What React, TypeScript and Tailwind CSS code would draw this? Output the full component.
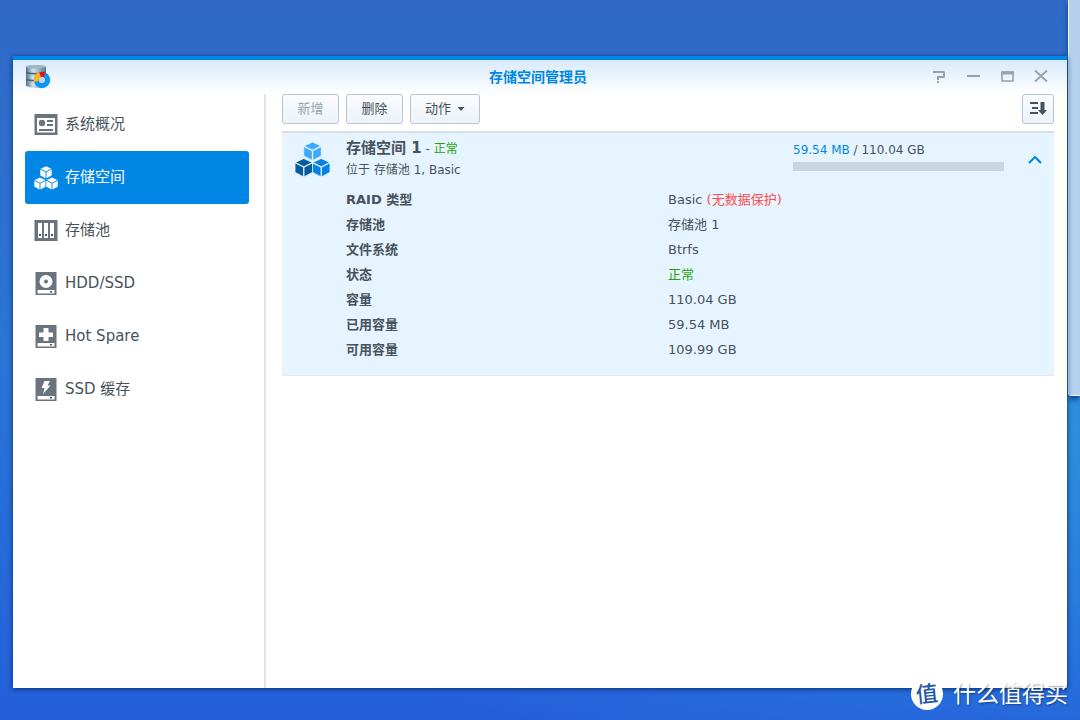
import { useState } from 'react';
import type { ReactNode } from 'react';
import clsx from 'clsx';

function CubesIcon({ size, top, left, right, line }: { size: number; top: string; left: string; right: string; line: string }) {
  const cubes = [
    { x: 17, y: 0, fill: top },
    { x: 8.5, y: 16, fill: left },
    { x: 25.5, y: 16, fill: right },
  ];
  return (
    <svg width={size} height={size} viewBox="0 0 34 34" className="shrink-0">
      {cubes.map((c) => (
        <g key={c.x} transform={`translate(${c.x} ${c.y})`}>
          <path d="M0 0L8.500 4V13.500L0 18L-8.500 13.500V4Z" fill={c.fill} stroke={line} strokeWidth="0.8" />
          <path d="M-8.500 4L0 8.400L8.500 4M0 8.400V18" fill="none" stroke={line} strokeWidth="1.300" />
        </g>
      ))}
    </svg>
  );
}

function OverviewIcon() {
  return (
    <svg width="24" height="24" viewBox="0 0 24 24" className="shrink-0">
      <path d="M0.5 1h23v21h-23z" fill="#69747f" />
      <path d="M3 5h18v14.500h-18z" fill="#fff" />
      <circle cx="8" cy="10" r="3.2" fill="#69747f" />
      <path d="M13 7h6v2h-6zM13 11h6v2h-6zM5 16h14v2H5z" fill="#69747f" />
    </svg>
  );
}

function PoolIcon() {
  return (
    <svg width="24" height="24" viewBox="0 0 24 24" className="shrink-0">
      <path d="M0.5 1h23v21h-23z" fill="#69747f" />
      <path d="M4 4h4v15h-4zM10 4h4v15h-4zM16 4h4v15h-4z" fill="#fff" />
      <path d="M5 15h2v2h-2zM11 15h2v2h-2zM17 15h2v2h-2z" fill="#4b5660" />
    </svg>
  );
}

function DriveIcon({ children }: { children: ReactNode }) {
  return (
    <svg width="24" height="24" viewBox="0 0 24 24" className="shrink-0">
      <path d="M1.5 0h21v23h-21z" fill="#69747f" />
      <path d="M3.500 18h17v3.500h-17z" fill="#fff" />
      <path d="M16 19h2v1.500h-2z" fill="#4b5660" />
      {children}
    </svg>
  );
}

const navItems = [
  { name: '系统概况', icon: <OverviewIcon /> },
  { name: '存储空间', icon: <CubesIcon size={24} top="#fff" left="#fff" right="#fff" line="#0086e5" /> },
  { name: '存储池', icon: <PoolIcon /> },
  {
    name: 'HDD/SSD',
    icon: (
      <DriveIcon>
        <circle cx="12" cy="9.500" r="6.5" fill="#fff" />
        <circle cx="12" cy="9.500" r="2" fill="#69747f" />
      </DriveIcon>
    ),
  },
  {
    name: 'Hot Spare',
    icon: (
      <DriveIcon>
        <path d="M9.500 3h5v4.500h4.500v4.500h-4.500v4h-5v-4H5V7.500h4.500z" fill="#fff" />
      </DriveIcon>
    ),
  },
  {
    name: 'SSD 缓存',
    icon: (
      <DriveIcon>
        <path d="M10.500 3h5.500l-2.500 4.500h3L9 16l1.500-6H7.500z" fill="#fff" />
      </DriveIcon>
    ),
  },
];

const details = [
  { label: 'RAID 类型', value: 'Basic', note: '(无数据保护)' },
  { label: '存储池', value: '存储池 1' },
  { label: '文件系统', value: 'Btrfs' },
  { label: '状态', value: '正常', ok: true },
  { label: '容量', value: '110.04 GB' },
  { label: '已用容量', value: '59.54 MB' },
  { label: '可用容量', value: '109.99 GB' },
];

const toolButton =
  'flex h-[30px] items-center justify-center rounded-[3px] border border-[#b9c4d2] bg-linear-to-b from-[#fafcfe] to-[#edf3f9] text-[13px]';

function AppIcon() {
  return (
    <svg width="26" height="26" viewBox="0 0 26 26">
      <defs>
        <linearGradient id="disk" x1="0" x2="1">
          <stop offset="0" stopColor="#4f7087" />
          <stop offset="0.35" stopColor="#d3e5f0" />
          <stop offset="1" stopColor="#54758c" />
        </linearGradient>
      </defs>
      <path d="M1 2.500Q11 -0.500 21 2.500V22Q11 26 1 22Z" fill="url(#disk)" />
      <ellipse cx="11" cy="2.800" rx="10" ry="1.800" fill="#9bb5c6" />
      <path d="M1 8.500Q11 11 21 8.500M1 15.500Q11 18 21 15.500" fill="none" stroke="#456276" strokeWidth="1.400" />
      <circle cx="17" cy="16" r="5.700" fill="none" stroke="#0b95f8" strokeWidth="5" />
      <path d="M11.500 17.500A5.700 5.700 0 0 1 17 10.300" fill="none" stroke="#fdb913" strokeWidth="5" />
      <path d="M15 10.600A5.700 5.700 0 0 1 19.500 10.900" fill="none" stroke="#e60f1e" strokeWidth="5" />
      <circle cx="17" cy="16" r="3" fill="#c3d8e5" />
    </svg>
  );
}

function TitleBar() {
  return (
    <header className="grid h-[34px] grid-cols-3 items-center bg-linear-to-b from-[#d8eafa] to-white pr-4 pl-3">
      <AppIcon />
      <h1 className="text-center text-sm font-bold text-[#0086e5]">存储空间管理员</h1>
      <div className="flex justify-end gap-[14px] text-[#98a2ad]">
        <button type="button" aria-label="帮助">
          <svg width="20" height="20" viewBox="0 0 20 20" fill="none" stroke="currentColor" strokeWidth="2">
            <path d="M4 5h10.500Q15 5 15 5.500V9.500Q15 10 14.500 10H9v3M8 15h2" />
          </svg>
        </button>
        <button type="button" aria-label="最小化">
          <svg width="20" height="20" viewBox="0 0 20 20" fill="none" stroke="currentColor" strokeWidth="2">
            <path d="M4 9h13" />
          </svg>
        </button>
        <button type="button" aria-label="最大化">
          <svg width="20" height="20" viewBox="0 0 20 20" fill="none" stroke="currentColor">
            <path d="M5 5h11v9H5z" strokeWidth="1.600" />
            <path d="M4 6h13" strokeWidth="3" />
          </svg>
        </button>
        <button type="button" aria-label="关闭">
          <svg width="20" height="20" viewBox="0 0 20 20" fill="none" stroke="currentColor" strokeWidth="1.800">
            <path d="M4 3.500l12 11M16 3.500l-12 11" />
          </svg>
        </button>
      </div>
    </header>
  );
}

function VolumeCard() {
  const [isOpen, setIsOpen] = useState(true);

  return (
    <section className="mt-[7px] border-t-2 border-b border-t-[#d3e0ec] border-b-[#dfeaf3] bg-[#e6f4ff]">
      <div className="flex items-start pt-[5px] pr-2">
        <div className="w-16 pt-1 pl-[13px]">
          <CubesIcon size={35} top="#3fa9ff" left="#045b9f" right="#0583e5" line="#e6f4ff" />
        </div>
        <div className="flex-1">
          <h2 className="text-[15px] leading-5 font-bold">
            存储空间 1<span className="text-xs font-normal"> - <span className="text-[#1fa50a]">正常</span></span>
          </h2>
          <p className="text-xs leading-6">位于 存储池 1, Basic</p>
        </div>
        <div className="w-[211px]">
          <p className="text-xs leading-6">
            <span className="text-[#0086e5]">59.54 MB</span> / 110.04 GB
          </p>
          <div className="h-[9px] bg-[#cbd5df]" />
        </div>
        <button
          type="button"
          aria-label="展开或收起"
          aria-expanded={isOpen}
          onClick={() => setIsOpen(!isOpen)}
          className="ml-[22px] pt-3 text-[#0086e5]"
        >
          <svg width="20" height="20" viewBox="0 0 20 20" fill="none" stroke="currentColor" strokeWidth="2">
            <path d="M3 13l6-6 6 6" />
          </svg>
        </button>
      </div>

      {isOpen && (
        <table className="mt-[5px] mb-[13px] w-full table-fixed text-left text-[13px]">
          <tbody>
            {details.map((row) => (
              <tr key={row.label} className="h-[25px] leading-[25px]">
                <th scope="row" className="w-1/2 pl-16 font-bold">{row.label}</th>
                <td className={clsx(row.ok && 'text-[#1fa50a]')}>
                  {row.value}
                  {row.note && <span className="text-[#ff4b4b]"> {row.note}</span>}
                </td>
              </tr>
            ))}
          </tbody>
        </table>
      )}
    </section>
  );
}

export default function App() {
  const [active, setActive] = useState('存储空间');

  return (
    <div className="relative flex min-h-screen flex-col overflow-hidden bg-linear-to-b from-[#3069c6] via-[#2a75d6] to-[#245fdb] pt-14 pr-[13px] pb-8 pl-[13px] font-['DejaVu_Sans','Noto_Sans_CJK_SC',sans-serif] text-[#48525c]">
      <div className="absolute inset-0 bg-radial-[at_100%_60%] from-[#2f9be0]/70 to-transparent to-60%" />

      {/* edge of the window that sits behind */}
      <div className="absolute top-0 right-0 h-[396px] w-3 rounded-bl-[3px] border-b border-l border-[#eaf5ff] bg-[#b5d1ee] shadow-md shadow-[#0b3f80]" />

      <div className="relative flex flex-1 flex-col border-t-4 border-[#0086e5] bg-white shadow-[0_1px_5px_#062e70]">
        <TitleBar />
        <div className="flex flex-1">
          <nav className="w-[253px] border-r-2 border-[#e2e4e6] pt-1 pr-[15px] pl-3">
            {navItems.map((item) => (
              <button
                key={item.name}
                type="button"
                onClick={() => setActive(item.name)}
                className={clsx(
                  'flex h-[53px] w-full items-center gap-[7px] rounded-[3px] pl-[9px] text-[15px]',
                  active === item.name && 'bg-[#0086e5] text-white',
                )}
              >
                {item.icon}
                {item.name}
              </button>
            ))}
          </nav>

          <main className="flex-1 pr-[13px] pl-4">
            <div className="flex gap-[7px]">
              <button type="button" disabled className={clsx(toolButton, 'w-[57px] text-[#9aa3ac]')}>新增</button>
              <button type="button" className={clsx(toolButton, 'w-[57px]')}>删除</button>
              <button type="button" className={clsx(toolButton, 'w-[70px] gap-1.5')}>
                动作
                <svg width="8" height="4" viewBox="0 0 8 4" fill="currentColor">
                  <path d="M0.500 0h7L4 4z" />
                </svg>
              </button>
              <button type="button" aria-label="排序" className={clsx(toolButton, 'ml-auto w-8')}>
                <svg width="20" height="16" viewBox="0 0 20 16" fill="currentColor">
                  <path d="M2 1h8v2H2zM4 6h6v2H4zM2 11h8v2H2zM12.500 1h4v8h2.500l-4.500 5-4.500-5h2.500z" />
                </svg>
              </button>
            </div>
            <VolumeCard />
          </main>
        </div>
      </div>

      <div className="absolute right-3 bottom-2.5 flex items-center gap-2.5 text-white">
        <span className="flex size-8 items-center justify-center rounded-full bg-white text-[22px] font-medium text-[#2457a6]">
          <span className="-rotate-6">值</span>
        </span>
        <span className="text-[23px] leading-8 [text-shadow:1px_1px_2px_#0006]">什么值得买</span>
      </div>
    </div>
  );
}
